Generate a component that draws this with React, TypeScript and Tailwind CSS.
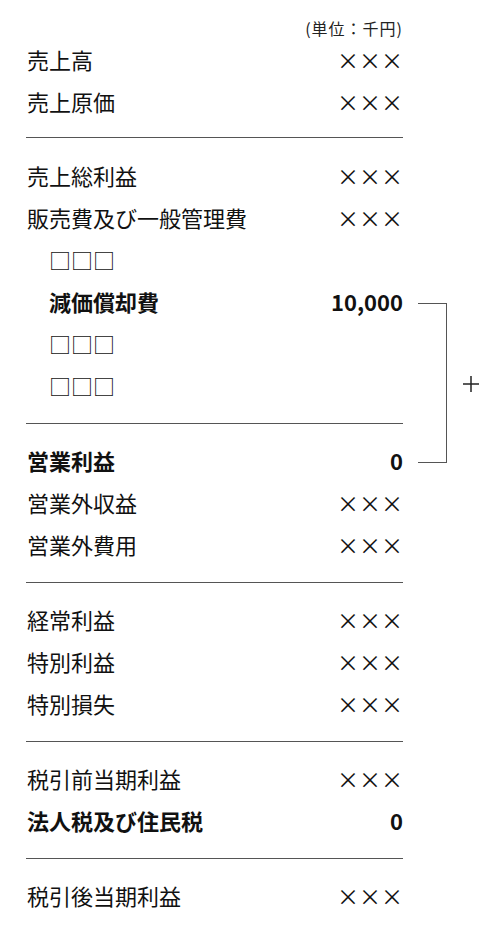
import React from "react";

type Row = { label: string; value?: string; bold?: boolean; indent?: boolean };

const sections: Row[][] = [
  [
    { label: "売上高", value: "×××" },
    { label: "売上原価", value: "×××" },
  ],
  [
    { label: "売上総利益", value: "×××" },
    { label: "販売費及び一般管理費", value: "×××" },
    { label: "□□□", indent: true },
    { label: "減価償却費", value: "10,000", bold: true, indent: true },
    { label: "□□□", indent: true },
    { label: "□□□", indent: true },
  ],
  [
    { label: "営業利益", value: "0", bold: true },
    { label: "営業外収益", value: "×××" },
    { label: "営業外費用", value: "×××" },
  ],
  [
    { label: "経常利益", value: "×××" },
    { label: "特別利益", value: "×××" },
    { label: "特別損失", value: "×××" },
  ],
  [
    { label: "税引前当期利益", value: "×××" },
    { label: "法人税及び住民税", value: "0", bold: true },
  ],
  [{ label: "税引後当期利益", value: "×××" }],
];

function RowView({ r }: { r: Row }) {
  return (
    <div
      className={
        "flex h-[42px] items-center justify-between pb-[4px] text-[22px] leading-none " +
        (r.bold ? "font-bold" : "font-normal")
      }
    >
      <span className={r.indent ? "pl-[23px]" : "pl-[1px]"}>{r.label}</span>
      {r.value ? <span>{r.value}</span> : null}
    </div>
  );
}

export default function App() {
  return (
    <div
      className="relative h-[927px] w-[500px] bg-white text-[#111]"
      style={{ fontFamily: '"Noto Sans CJK JP", "Noto Sans", sans-serif' }}
    >
      <div className="w-[403px] pl-[26px] pt-[18px]">
        <div className="flex h-[20px] items-center justify-end text-[16px] leading-none tracking-[1px] text-[#222]">
          (単位：千円)
        </div>
        <div className="mt-[2px]">
          {sections.map((sec, i) => (
            <div key={i}>
              {i > 0 && (
                <div
                  className={
                    (i === 1 ? "mt-[13px] mb-[18px]" : "mt-[15px] mb-[17px]") +
                    " h-px bg-[#555]"
                  }
                />
              )}
              {sec.map((r, j) => (
                <RowView key={j} r={r} />
              ))}
            </div>
          ))}
        </div>
      </div>
      <div className="absolute left-[418px] top-[303px] h-[160px] w-[29px] border-y border-r border-[#555]" />
      <svg
        className="absolute left-[462px] top-[375px]"
        width="18"
        height="18"
        viewBox="0 0 18 18"
      >
        <line x1="9" y1="1" x2="9" y2="17" stroke="#222" strokeWidth="1.5" />
        <line x1="1" y1="9" x2="17" y2="9" stroke="#222" strokeWidth="1.5" />
      </svg>
    </div>
  );
}
